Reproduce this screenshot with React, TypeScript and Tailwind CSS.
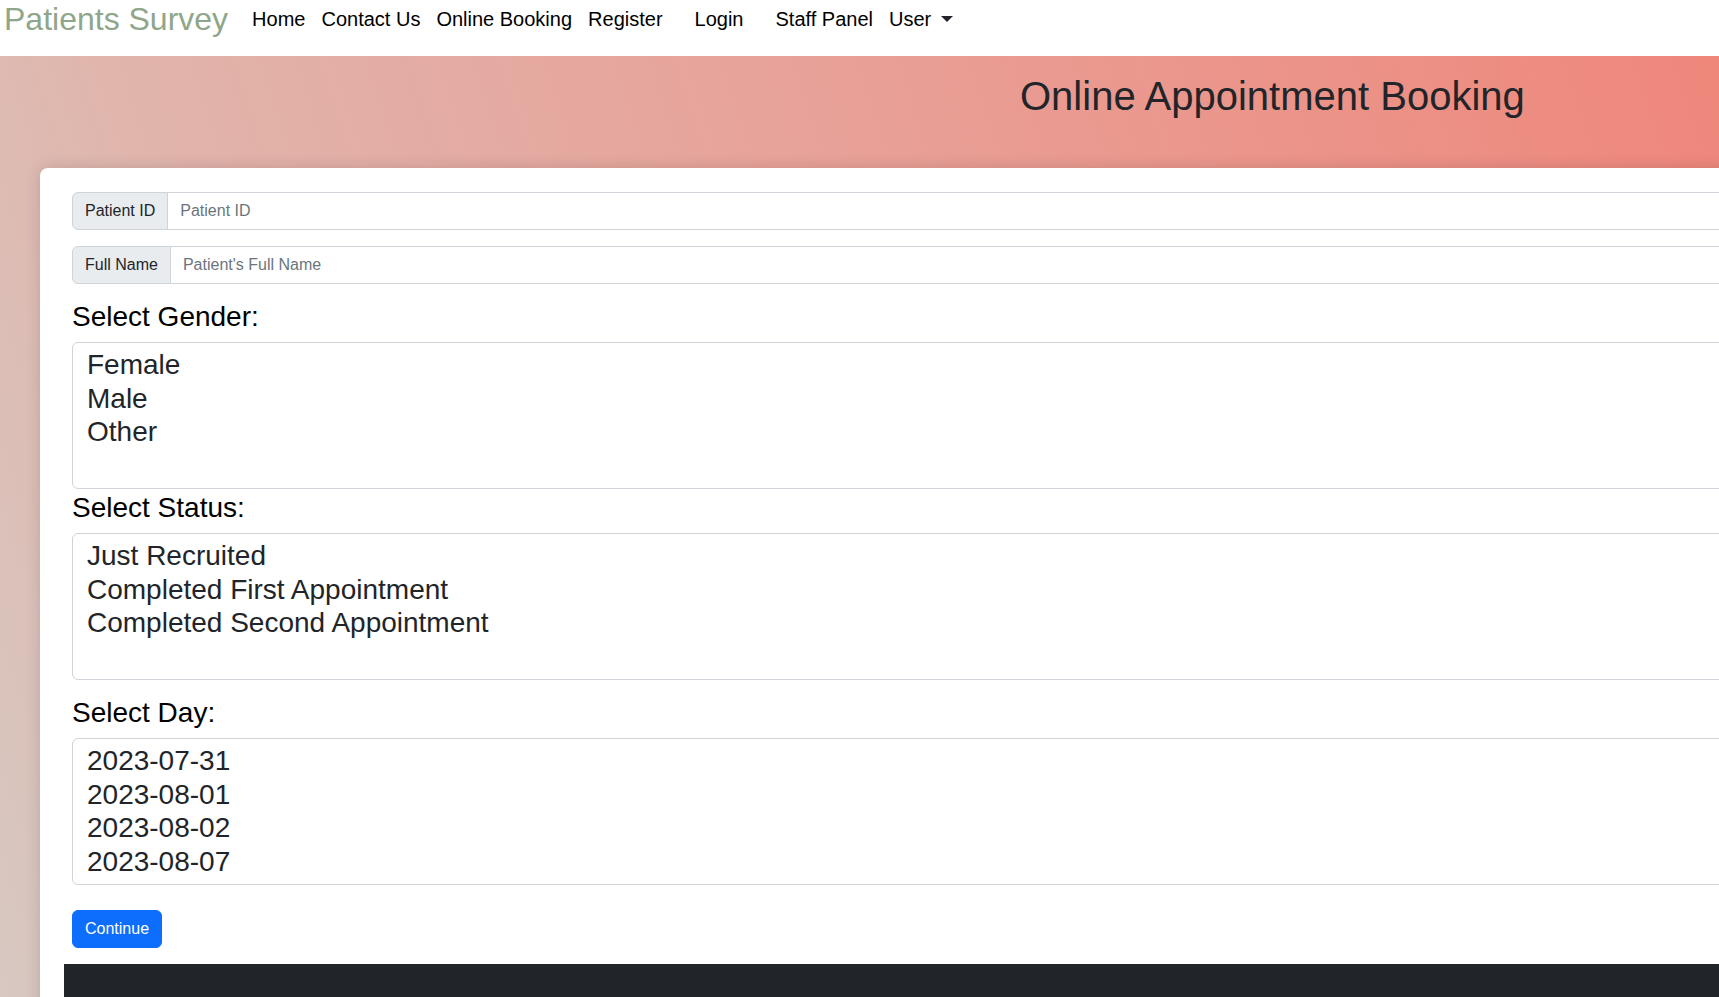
import React from "react";

const navLinks: { label: string; cls: string }[] = [
  { label: "Home", cls: "px-2" },
  { label: "Contact Us", cls: "px-2" },
  { label: "Online Booking", cls: "px-2" },
  { label: "Register", cls: "px-2" },
  { label: "Login", cls: "px-2 mx-4" },
  { label: "Staff Panel", cls: "px-2" },
];

function InputGroup({ label, placeholder }: { label: string; placeholder: string }) {
  return (
    <div className="flex h-[38px] w-full text-[16px] leading-[24px]">
      <span className="flex items-center whitespace-nowrap rounded-l-[6px] border border-[#ced4da] bg-[#e9ecef] px-3 text-[#212529]">
        {label}
      </span>
      <input
        type="text"
        placeholder={placeholder}
        className="-ml-px flex-1 rounded-r-[6px] border border-[#ced4da] bg-white px-3 text-[#212529] outline-none placeholder:text-[#6c757d]"
      />
    </div>
  );
}

function ListSelect({ options, extra = "pb-1.5" }: { options: string[]; extra?: string }) {
  return (
    <select
      multiple
      className={
        "block h-[147px] w-full overflow-hidden rounded-[6px] border border-[#ced4da] bg-white pl-[14px] pr-3 pt-1.5 text-[28px] text-[#212529] outline-none " +
        extra
      }
    >
      {options.map((o) => (
        <option key={o} value={o}>
          {o}
        </option>
      ))}
    </select>
  );
}

export default function App() {
  return (
    <div className="h-screen w-full overflow-hidden bg-white font-['Liberation_Sans',Arial,sans-serif] text-[#212529]">
      <nav className="flex h-[56px] items-start bg-white pl-[4px] pt-px">
        <a className="mr-4 whitespace-nowrap text-[32px] leading-[37px] text-[#8fa68b]">Patients Survey</a>
        <ul className="flex items-start text-[20px] leading-[37px] text-black">
          {navLinks.map((l) => (
            <li key={l.label} className={l.cls + " whitespace-nowrap"}>
              {l.label}
            </li>
          ))}
          <li className="flex items-center whitespace-nowrap px-2">
            User
            <span className="ml-[10px] mt-[-2px] inline-block h-0 w-0 border-x-[6px] border-t-[6px] border-x-transparent border-t-[#212529]" />
          </li>
        </ul>
      </nav>

      <div className="h-[941px] w-full overflow-hidden bg-[linear-gradient(72deg,#d7c8c1_0%,#e0b5ac_20%,#e8a198_55%,#ef877b_100%)]">
        <header className="h-[112px] pl-[1020px] pt-[16px]">
          <h1 className="whitespace-nowrap text-[40px] leading-[48px] text-[#212529]">Online Appointment Booking</h1>
        </header>

        <div className="ml-10 w-[2400px] rounded-tl-[8px] bg-white p-6 shadow-[0_0_16px_rgba(0,0,0,0.14)]">
          <form className="px-2">
            <InputGroup label="Patient ID" placeholder="Patient ID" />
            <div className="mt-4">
              <InputGroup label="Full Name" placeholder="Patient's Full Name" />
            </div>

            <label className="mb-2 mt-4 block text-[28px] leading-[34px] text-black">Select Gender:</label>
            <ListSelect options={["Female", "Male", "Other"]} />

            <label className="mb-2 mt-[2px] block text-[28px] leading-[34px] text-black">Select Status:</label>
            <ListSelect options={["Just Recruited", "Completed First Appointment", "Completed Second Appointment"]} />

            <label className="mb-2 mt-4 block text-[28px] leading-[34px] text-black">Select Day:</label>
            <ListSelect
              extra="pb-0"
              options={["2023-07-31", "2023-08-01", "2023-08-02", "2023-08-07", "2023-08-08", "2023-08-09", "2023-08-14"]}
            />

            <button
              type="button"
              className="mt-[25px] h-[38px] rounded-[6px] border border-[#0d6efd] bg-[#0d6efd] px-3 text-[16px] leading-[24px] text-white"
            >
              Continue
            </button>
          </form>
          <footer className="mt-4 h-[300px] w-full bg-[#212529]" />
        </div>
      </div>
    </div>
  );
}
